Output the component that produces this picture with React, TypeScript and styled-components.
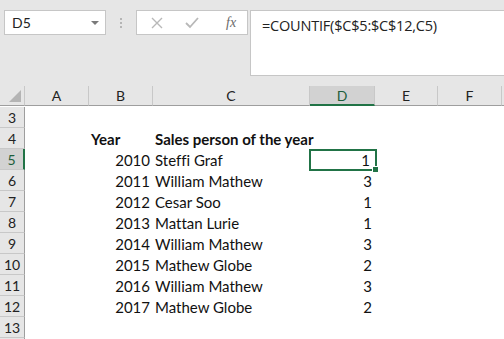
import styled, {createGlobalStyle} from "styled-components";

const GlobalStyle = createGlobalStyle`
  html, body {
    margin: 0;
    padding: 0;
    background: #ffffff;
    overflow: hidden;
  }
  body {
    font-family: "Lato", "Liberation Sans", sans-serif;
    font-variant-ligatures: none;
  }
`;

const Window = styled.div`
  width: 504px;
  height: 339px;
  overflow: hidden;
  background: #ffffff;
`;

/* Name box + formula bar */
const Toolbar = styled.div`
  height: 86px;
  background: #e6e6e6;
  display: flex;
  align-items: flex-start;
  padding: 10px 0 0 4px;
  box-sizing: border-box;
`;

const NameBox = styled.div`
  width: 102px;
  height: 25px;
  box-sizing: border-box;
  background: #ffffff;
  border: 1px solid #c6c6c6;
  display: flex;
  align-items: center;
  justify-content: space-between;
  padding: 0 6px 0 7px;
  font-size: 14px;
  color: #222;
`;

const Caret = styled.span`
  width: 0;
  height: 0;
  border-left: 4px solid transparent;
  border-right: 4px solid transparent;
  border-top: 4px solid #7a7a7a;
`;

const Grip = styled.div`
  width: 30px;
  height: 25px;
  display: flex;
  flex-direction: column;
  align-items: center;
  justify-content: center;
  gap: 2px;

  & > span {
    width: 2px;
    height: 2px;
    background: #b5b5b5;
  }
`;

const IconBox = styled.div`
  width: 112px;
  height: 25px;
  box-sizing: border-box;
  background: #ffffff;
  border: 1px solid #c6c6c6;
  display: flex;
  align-items: center;
  padding: 0 0 0 14px;
  gap: 22px;
`;

const Fx = styled.span`
  font-family: "Liberation Serif", serif;
  font-style: italic;
  font-size: 14px;
  color: #6a6a6a;
  margin-left: 5px;
`;

const FormulaBar = styled.div`
  flex: 1;
  height: 66px;
  margin-left: 2px;
  box-sizing: border-box;
  background: #ffffff;
  border: 1px solid #c6c6c6;
  border-right: none;
  padding: 5px 0 0 11px;
  font-size: 14.5px;
  color: #222;
  font-family: "Open Sans", "Liberation Sans", sans-serif;
  letter-spacing: -0.2px;
`;

/* Sheet grid */
const Sheet = styled.div`
  display: grid;
  grid-template-columns: 25px 64px 64px 157px 65px 63px 64px 1fr;
  grid-auto-rows: 21px;
  font-size: 15px;
  color: #111;
`;

const ColHead = styled.div<{ $active?: boolean }>`
  height: 20px;
  box-sizing: border-box;
  background: ${p => (p.$active ? "#d2d2d2" : "#e6e6e6")};
  border-right: 1px solid #c8c8c8;
  border-bottom: ${p => (p.$active ? "2px solid #217346" : "1px solid #9e9e9e")};
  display: flex;
  align-items: center;
  justify-content: center;
  font-size: 14px;
  color: ${p => (p.$active ? "#1d5e3c" : "#222")};
`;

const Corner = styled(ColHead)`
  position: relative;
  border-right: 1px solid #c8c8c8;

  &::after {
    content: "";
    position: absolute;
    right: 3px;
    bottom: 3px;
    border-left: 12px solid transparent;
    border-bottom: 12px solid #b4b4b4;
  }
`;

const RowHead = styled.div<{ $active?: boolean }>`
  box-sizing: border-box;
  background: ${p => (p.$active ? "#d2d2d2" : "#e6e6e6")};
  border-right: ${p => (p.$active ? "2px solid #217346" : "1px solid #9e9e9e")};
  border-bottom: 1px solid #c8c8c8;
  display: flex;
  align-items: center;
  justify-content: center;
  font-size: 14px;
  color: ${p => (p.$active ? "#1d5e3c" : "#222")};
`;

const Cell = styled.div<{ $align?: "left" | "right"; $bold?: boolean }>`
  display: flex;
  align-items: center;
  justify-content: ${p => (p.$align === "right" ? "flex-end" : "flex-start")};
  padding: 0 3px 0 2px;
  white-space: nowrap;
  overflow: visible;
  font-weight: ${p => (p.$bold ? 700 : 400)};
`;

const SelectedCell = styled(Cell)`
  position: relative;
  padding-right: 5px;

  &::before {
    content: "";
    position: absolute;
    left: -1px;
    top: 0;
    right: -2px;
    bottom: -1px;
    border: 2px solid #217346;
  }

  &::after {
    content: "";
    position: absolute;
    right: -4px;
    bottom: -3px;
    width: 5px;
    height: 5px;
    background: #217346;
    border: 1px solid #ffffff;
  }
`;

const columns = ["A", "B", "C", "D", "E", "F"];

const rows = [
  {year: 2010, name: "Steffi Graf", count: 1},
  {year: 2011, name: "William Mathew", count: 3},
  {year: 2012, name: "Cesar Soo", count: 1},
  {year: 2013, name: "Mattan Lurie", count: 1},
  {year: 2014, name: "William Mathew", count: 3},
  {year: 2015, name: "Mathew Globe", count: 2},
  {year: 2016, name: "William Mathew", count: 3},
  {year: 2017, name: "Mathew Globe", count: 2},
];

const CrossIcon = () => (
  <svg width="12" height="12" viewBox="0 0 12 12">
    <path d="M1 1 L11 11 M11 1 L1 11" stroke="#b8b8b8" strokeWidth="1.4" fill="none"/>
  </svg>
);

const CheckIcon = () => (
  <svg width="14" height="12" viewBox="0 0 14 12">
    <path d="M1 6 L5 10 L13 1" stroke="#b8b8b8" strokeWidth="1.8" fill="none"/>
  </svg>
);

const Blank = () => (
  <>
    <Cell/><Cell/><Cell/><Cell/><Cell/><Cell/><Cell/>
  </>
);

const App = () => {
  return (
    <Window>
      <GlobalStyle/>
      <Toolbar>
        <NameBox>
          <span>D5</span>
          <Caret/>
        </NameBox>
        <Grip><span/><span/><span/></Grip>
        <IconBox>
          <CrossIcon/>
          <CheckIcon/>
          <Fx>fx</Fx>
        </IconBox>
        <FormulaBar>=COUNTIF($C$5:$C$12,C5)</FormulaBar>
      </Toolbar>
      <Sheet>
        <Corner/>
        {columns.map(c => (
          <ColHead key={c} $active={c === "D"}>{c}</ColHead>
        ))}
        <ColHead/>

        <RowHead>3</RowHead>
        <Blank/>

        <RowHead>4</RowHead>
        <Cell/>
        <Cell $bold>Year</Cell>
        <Cell $bold>Sales person of the year</Cell>
        <Cell/><Cell/><Cell/><Cell/>

        {rows.map((r, i) => {
          const rowNum = i + 5;
          const active = rowNum === 5;
          return [
            <RowHead key={`h${rowNum}`} $active={active}>{rowNum}</RowHead>,
            <Cell key={`a${rowNum}`}/>,
            <Cell key={`b${rowNum}`} $align="right">{r.year}</Cell>,
            <Cell key={`c${rowNum}`}>{r.name}</Cell>,
            active
              ? <SelectedCell key={`d${rowNum}`} $align="right">{r.count}</SelectedCell>
              : <Cell key={`d${rowNum}`} $align="right">{r.count}</Cell>,
            <Cell key={`e${rowNum}`}/>,
            <Cell key={`f${rowNum}`}/>,
            <Cell key={`g${rowNum}`}/>,
          ];
        })}

        <RowHead>13</RowHead>
        <Blank/>
        <RowHead/>
        <Blank/>
      </Sheet>
    </Window>
  );
};

export default App;
